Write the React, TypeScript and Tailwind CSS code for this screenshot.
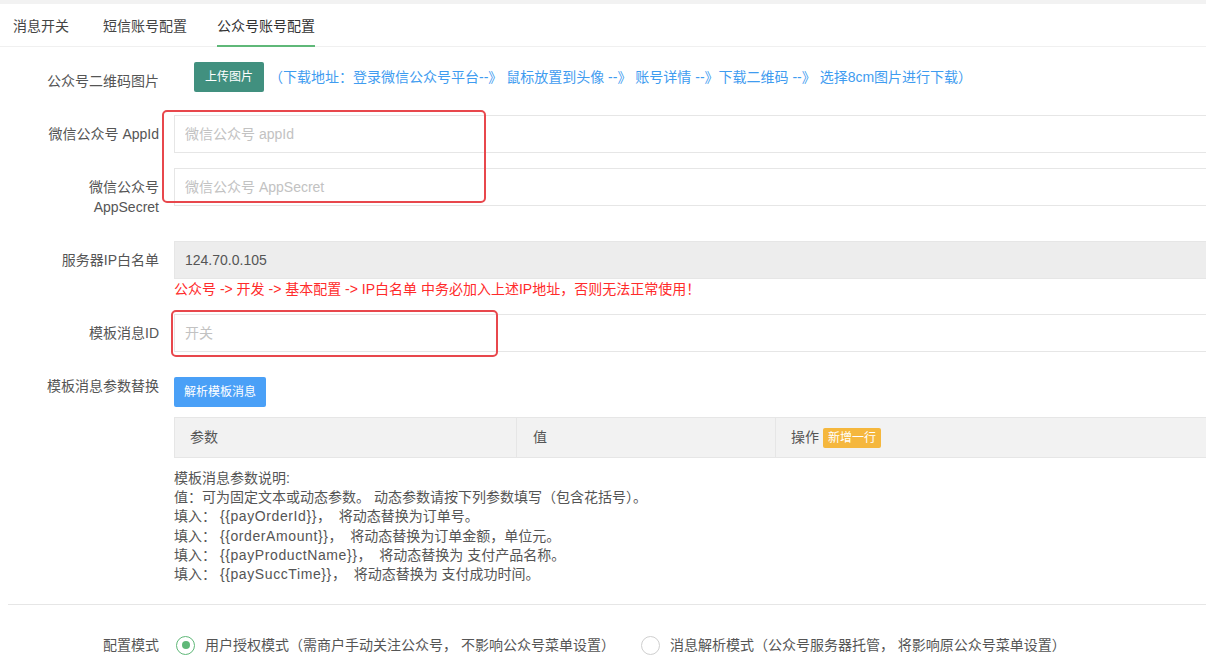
import React from "react";

const labelCls =
  "w-[174px] shrink-0 pl-[44px] pr-[15px] py-[9px] leading-[20px] text-right text-[14px] text-[#555]";

function Row({
  label,
  children,
  className = "mb-[15px]",
}: {
  label: React.ReactNode;
  children: React.ReactNode;
  className?: string;
}) {
  return (
    <div className={"flex items-start " + className}>
      <div className={labelCls}>{label}</div>
      <div className="flex-1 min-w-0">{children}</div>
    </div>
  );
}

function TextInput({ placeholder }: { placeholder: string }) {
  return (
    <input
      className="block w-full h-[38px] border border-[#e6e6e6] pl-[10px] text-[14px] text-[#333] outline-none placeholder:text-[#c2c2c2] bg-white"
      placeholder={placeholder}
    />
  );
}

function Fill({ code, text }: { code: string; text: string }) {
  return (
    <div>
      填入：&nbsp;<span className="tracking-[0.6px]">{code}</span>，&nbsp;&nbsp;{text}
    </div>
  );
}

export default function App() {
  return (
    <div className="relative w-[1206px] h-[667px] overflow-hidden bg-white font-['Liberation_Sans','Noto_Sans_CJK_SC',sans-serif] text-[14px] text-[#555]">
      <div className="h-[4px] bg-[#f2f2f2]" />
      <div className="flex items-start h-[43px] border-b border-[#f0f0f0]">
        <div className="ml-[13px] h-[43px] pt-[3px] flex items-center border-b-2 border-transparent text-[#444]">
          消息开关
        </div>
        <div className="ml-[34px] h-[43px] pt-[3px] flex items-center border-b-2 border-transparent text-[#444]">
          短信账号配置
        </div>
        <div className="ml-[30px] h-[43px] pt-[3px] flex items-center border-b-2 border-[#5fb878] text-[#333]">
          公众号账号配置
        </div>
      </div>

      <div className="w-[1300px] pt-[15px]">
        <Row label="公众号二维码图片">
          <div className="flex items-center h-[30px] gap-[5px]">
            <button className="ml-[20px] h-[30px] px-[11px] rounded-[2px] bg-[#41907f] text-white text-[12px]">
              上传图片
            </button>
            <span className="text-[14px] text-[#3f9cf0] whitespace-nowrap">
              （下载地址：登录微信公众号平台--》 鼠标放置到头像 --》 账号详情 --》下载二维码 --》 选择8cm图片进行下载）
            </span>
          </div>
        </Row>

        <Row label="微信公众号 AppId">
          <TextInput placeholder="微信公众号 appId" />
        </Row>

        <Row label="微信公众号 AppSecret">
          <TextInput placeholder="微信公众号 AppSecret" />
        </Row>

        <Row label="服务器IP白名单">
          <div className="h-[38px] border border-[#e6e6e6] bg-[#ededed] pl-[10px] flex items-center text-[14px] text-[#555]">
            124.70.0.105
          </div>
          <div className="leading-[20px] text-[14px] text-[#ff2b2b]">
            公众号 -&gt; 开发 -&gt; 基本配置 -&gt; IP白名单 中务必加入上述IP地址，否则无法正常使用！
          </div>
        </Row>

        <Row label="模板消息ID">
          <TextInput placeholder="开关" />
        </Row>

        <Row label="模板消息参数替换" className="mb-[20px]">
          <div className="pt-[10px]">
            <button className="h-[30px] px-[10px] rounded-[2px] bg-[#4aa0f7] text-white text-[12px]">
              解析模板消息
            </button>
            <div className="mt-[10px] flex h-[41px] border-y border-l border-[#e6e6e6] bg-[#f2f2f2] text-[14px] text-[#555]">
              <div className="w-[342px] border-r border-[#e6e6e6] pl-[15px] flex items-center">
                参数
              </div>
              <div className="w-[259px] border-r border-[#e6e6e6] pl-[16px] flex items-center">
                值
              </div>
              <div className="flex-1 pl-[15px] flex items-center gap-[4px]">
                <span>操作</span>
                <span className="h-[20px] px-[5px] rounded-[2px] bg-[#f5b73d] text-white text-[12px] leading-[20px]">
                  新增一行
                </span>
              </div>
            </div>
            <div className="mt-[11px] text-[14px] leading-[19.2px] text-[#555]">
              <div>模板消息参数说明:</div>
              <div>值：可为固定文本或动态参数。 动态参数请按下列参数填写（包含花括号）。</div>
              <Fill code="{{payOrderId}}" text="将动态替换为订单号。" />
              <Fill code="{{orderAmount}}" text="将动态替换为订单金额，单位元。" />
              <Fill code="{{payProductName}}" text="将动态替换为 支付产品名称。" />
              <Fill code="{{paySuccTime}}" text="将动态替换为 支付成功时间。" />
            </div>
          </div>
        </Row>

        <div className="ml-[8px] border-t border-[#e6e6e6]" />

        <div className="flex items-start mt-[21px]">
          <div className={labelCls}>配置模式</div>
          <div className="flex items-center h-[38px] text-[14px] text-[#555]">
            <span className="ml-[2px] w-[19px] h-[19px] rounded-full border-[1.5px] border-[#5fb878] flex items-center justify-center">
              <span className="w-[8px] h-[8px] rounded-full bg-[#5fb878]" />
            </span>
            <span className="ml-[10px]">
              用户授权模式（需商户手动关注公众号， 不影响公众号菜单设置）
            </span>
            <span className="ml-[26px] w-[19px] h-[19px] rounded-full border-[1.5px] border-[#cfcfcf]" />
            <span className="ml-[10px]">
              消息解析模式（公众号服务器托管， 将影响原公众号菜单设置）
            </span>
          </div>
        </div>
      </div>

      <div className="absolute left-[162px] top-[110px] w-[324px] h-[93px] border-2 border-[#e8474c] rounded-[5px] pointer-events-none" />
      <div className="absolute left-[171px] top-[310px] w-[327px] h-[47px] border-2 border-[#e8474c] rounded-[5px] pointer-events-none" />
    </div>
  );
}
